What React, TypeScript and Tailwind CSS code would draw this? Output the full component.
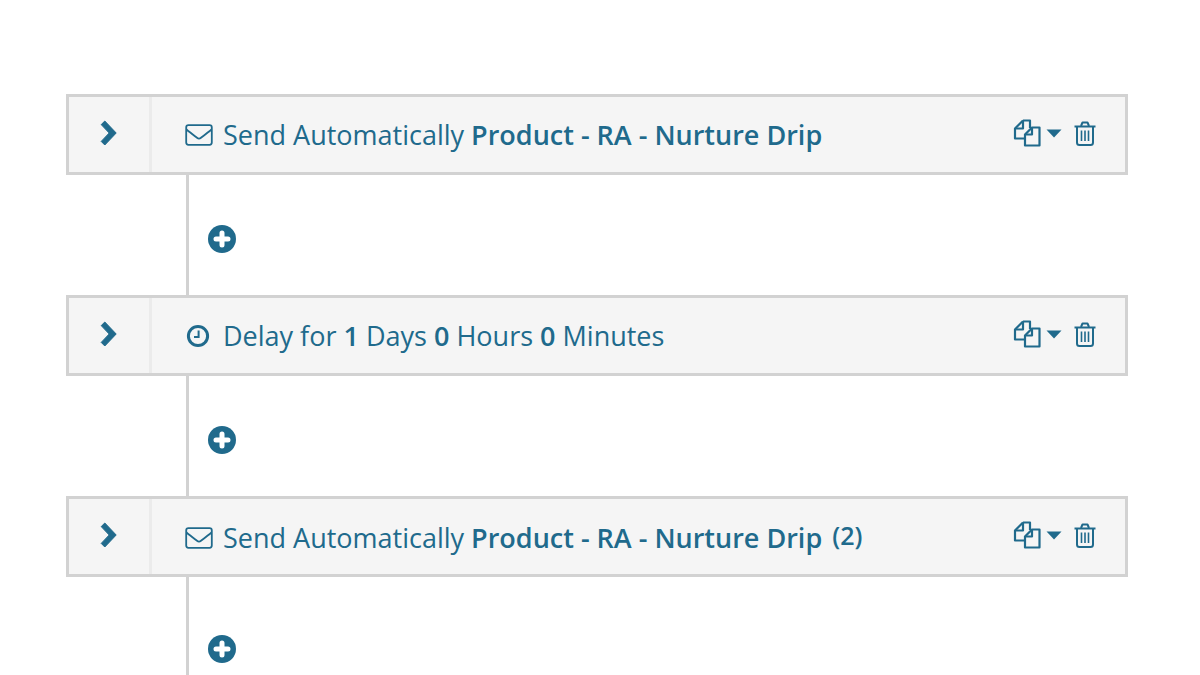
import React from 'react';

const teal = '#206a8c';

function ChevronIcon() {
  return (
    <svg width="17" height="26" viewBox="0 0 17 26">
      <path d="M1.2 4.6 L4.8 1 L16.2 13 L4.8 25 L1.2 21.4 L9.2 13 Z" fill={teal} stroke={teal} strokeWidth="1" strokeLinejoin="round" />
    </svg>
  );
}

function EnvelopeIcon() {
  return (
    <svg width="28" height="22" viewBox="0 0 28 22" fill="none" stroke={teal} strokeWidth="1.8">
      <rect x="1.2" y="1.2" width="25.6" height="19.6" rx="2.2" />
      <path d="M1.5 5.5 C5 8.5 9 11.5 12 13.8 C13.2 14.7 14.8 14.7 16 13.8 C19 11.5 23 8.5 26.5 5.5" />
    </svg>
  );
}

function ClockIcon() {
  return (
    <svg width="24" height="24" viewBox="0 0 24 24" fill="none" stroke={teal}>
      <circle cx="12" cy="12" r="9.6" strokeWidth="3" />
      <path d="M12.6 6.5 V13 H8" strokeWidth="2" />
    </svg>
  );
}

function PlusCircleIcon() {
  return (
    <svg width="28" height="28" viewBox="0 0 28 28">
      <circle cx="14" cy="14" r="14" fill={teal} />
      <path d="M14 8 V20 M8 14 H20" stroke="#fff" strokeWidth="5" strokeLinecap="round" />
    </svg>
  );
}

function CopyIcon() {
  return (
    <svg width="28" height="28" viewBox="0 0 28 28" fill="none" stroke={teal} strokeWidth="2.2" strokeLinejoin="round">
      <path d="M10 1.5 H17 V9 M10 1.5 L2 9.5 V19.5 H11" />
      <path d="M10 1.5 V9.5 H2" />
      <path d="M19 8.5 H26.5 V26.5 H12 V15.5 Z" fill="#f5f5f5" />
      <path d="M19 8.5 V15.5 H12" />
    </svg>
  );
}

function CaretIcon() {
  return (
    <svg width="16" height="9" viewBox="0 0 16 9">
      <path d="M0.5 0.5 H15.5 L8 8.5 Z" fill={teal} />
    </svg>
  );
}

function TrashIcon() {
  return (
    <svg width="22" height="25" viewBox="0 0 22 25" fill="none" stroke={teal} strokeWidth="2" strokeLinejoin="round">
      <path d="M0.5 5.5 H21.5" />
      <path d="M7 5 L8.5 1.5 H13.5 L15 5" />
      <path d="M3 5.5 V21.5 Q3 24 5.5 24 H16.5 Q19 24 19 21.5 V5.5" />
      <path d="M7.5 9.5 V20 M11 9.5 V20 M14.5 9.5 V20" strokeWidth="1.6" />
    </svg>
  );
}

function StepCard({ icon, children, shifted }: { icon: React.ReactNode; children: React.ReactNode; shifted?: boolean }) {
  return (
    <div className="flex h-[81px] border-[3px] border-[#d2d2d2] bg-[#f5f5f5]">
      <div className="flex w-[83px] shrink-0 items-center justify-center border-r-[3px] border-[#ebebeb] pb-[4px] pr-[2px]">
        <ChevronIcon />
      </div>
      <div className="flex min-w-0 flex-1 items-center pl-[33px] pr-[29px]">
        <div className={`flex w-[38px] shrink-0 items-center ${shifted ? 'pt-[2px]' : ''}`}>{icon}</div>
        <div className={`whitespace-nowrap text-[27px] leading-[36px] text-[#206a8c] ${shifted ? 'pt-[3px]' : ''}`}>{children}</div>
        <div className="ml-auto flex items-center pb-[3px]">
          <CopyIcon />
          <div className="ml-[5px] mr-[12px]">
            <CaretIcon />
          </div>
          <TrashIcon />
        </div>
      </div>
    </div>
  );
}

function Connector({ height, top }: { height: string; top: string }) {
  return (
    <div className={`ml-[120px] border-l-[3px] border-[#d2d2d2] pl-[19px] ${height} ${top}`}>
      <PlusCircleIcon />
    </div>
  );
}

export default function App() {
  return (
    <div className="h-[675px] w-[1200px] overflow-hidden bg-white pl-[66px] pr-[72px] pt-[94px] font-['Open_Sans',sans-serif]">
      <StepCard icon={<EnvelopeIcon />}>
        Send Automatically <b className="font-semibold">Product - RA - Nurture Drip</b>
      </StepCard>
      <Connector height="h-[120px]" top="pt-[50px]" />
      <StepCard icon={<div className="pl-[1px]"><ClockIcon /></div>}>
        Delay for <b className="font-semibold">1</b> Days <b className="font-semibold">0</b> Hours <b className="font-semibold">0</b> Minutes
      </StepCard>
      <Connector height="h-[120px]" top="pt-[50px]" />
      <StepCard icon={<EnvelopeIcon />} shifted>
        Send Automatically <b className="font-semibold">Product - RA - Nurture Drip</b>
        <span className="relative top-[-3px] ml-[10px] text-[25px] font-semibold">(2)</span>
      </StepCard>
      <Connector height="h-[98px]" top="pt-[58px]" />
    </div>
  );
}
